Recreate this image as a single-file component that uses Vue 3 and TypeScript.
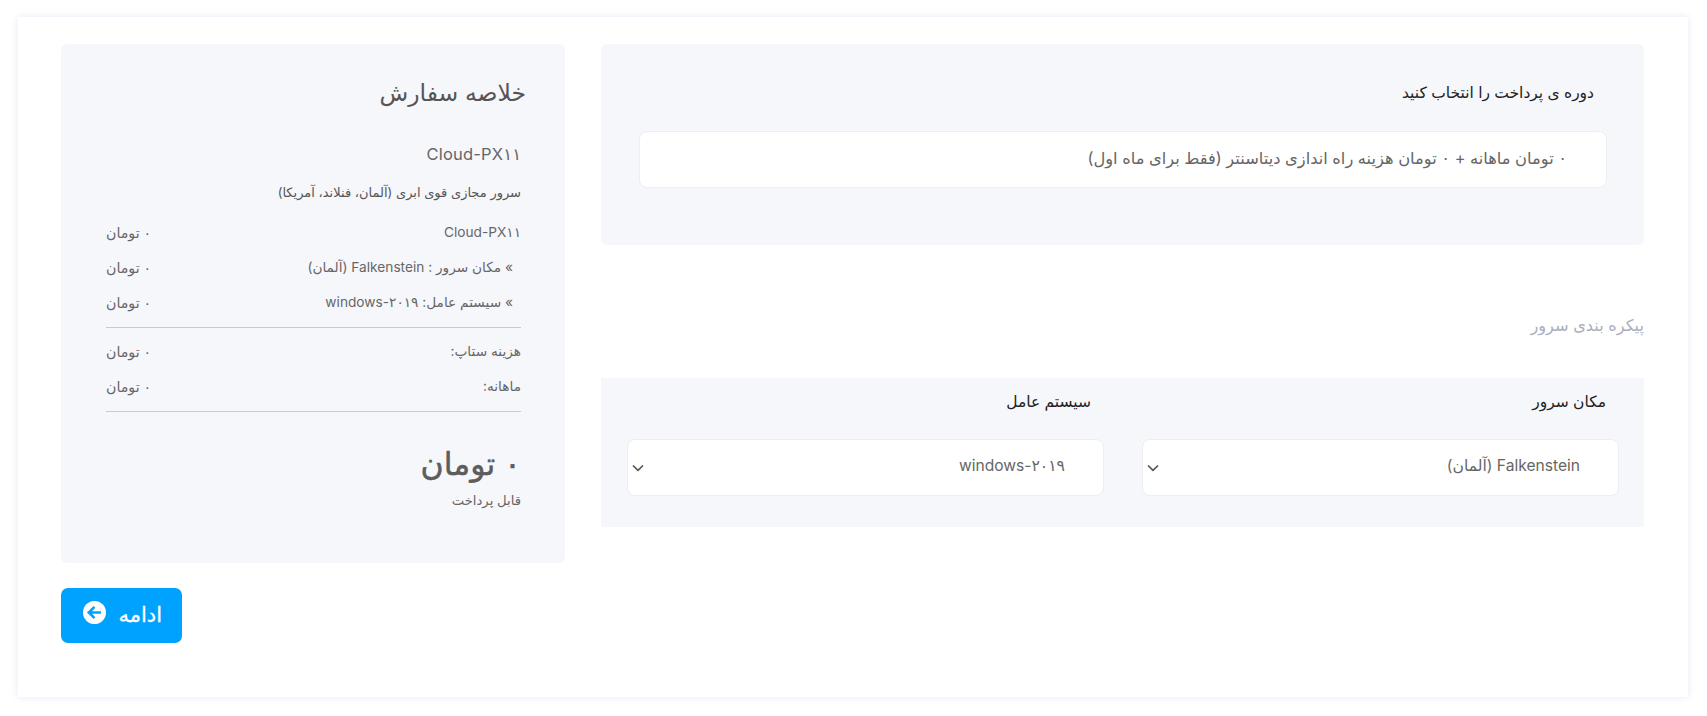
<script setup lang="ts">
interface Row { label: string; price: string; sub?: boolean }
const price = '۰ تومان'
const rowsA: Row[] = [
  { label: 'Cloud-PX۱۱', price },
  { label: '» مکان سرور : Falkenstein (آلمان)', price, sub: true },
  { label: '» سیستم عامل: windows-۲۰۱۹', price, sub: true },
]
const rowsB: Row[] = [
  { label: 'هزینه ستاپ:', price },
  { label: 'ماهانه:', price },
]
const selects = [
  { label: 'مکان سرور', value: 'Falkenstein (آلمان)' },
  { label: 'سیستم عامل', value: 'windows-۲۰۱۹' },
]
</script>

<template>
  <div class="page">
    <div class="card">
      <main class="main">
        <section class="panel period">
          <h3 class="period-title">دوره ی پرداخت را انتخاب کنید</h3>
          <div class="period-box">۰ تومان ماهانه + ۰ تومان هزینه راه اندازی دیتاسنتر (فقط برای ماه اول)</div>
        </section>
        <h4 class="section-title">پیکره بندی سرور</h4>
        <section class="panel config">
          <div v-for="s in selects" :key="s.label" class="field">
            <label class="field-label">{{ s.label }}</label>
            <div class="select">
              <span class="select-value">{{ s.value }}</span>
              <svg class="chevron" width="12" height="8" viewBox="0 0 12 8" fill="none">
                <path d="M1 1.5 6 6.3l5-4.8" stroke="#555" stroke-width="1.7" />
              </svg>
            </div>
          </div>
        </section>
      </main>
      <aside class="side">
        <section class="panel summary">
          <h2 class="summary-title">خلاصه سفارش</h2>
          <div class="product">Cloud-PX۱۱</div>
          <p class="desc">سرور مجازی قوی ابری (آلمان، فنلاند، آمریکا)</p>
          <div class="rows">
            <div v-for="r in rowsA" :key="r.label" class="row">
              <span :class="{ sub: r.sub }">{{ r.label }}</span><span class="price">{{ r.price }}</span>
            </div>
          </div>
          <hr class="rule" />
          <div class="rows">
            <div v-for="r in rowsB" :key="r.label" class="row">
              <span>{{ r.label }}</span><span class="price">{{ r.price }}</span>
            </div>
          </div>
          <hr class="rule" />
          <div class="total">۰ تومان</div>
          <div class="payable">قابل پرداخت</div>
        </section>
        <button class="next" type="button">
          <span>ادامه</span>
          <svg class="next-icon" width="23" height="23" viewBox="0 0 23 23">
            <circle cx="11.5" cy="11.5" r="11.5" fill="#fff" />
            <path d="M18 11.5H6.5M11.5 5.8 5.8 11.5l5.7 5.7" fill="none" stroke="#00a2ff" stroke-width="2.6" />
          </svg>
        </button>
      </aside>
    </div>
  </div>
</template>

<style>
html, body { margin: 0; background: #fff; }
</style>

<style scoped>
.page {
  height: 716px;
  box-sizing: border-box;
  padding: 17px 19px 19px 18px;
  direction: rtl;
  font-family: "Inter", "DejaVu Sans", sans-serif;
  color: #666;
}
.card {
  height: 100%;
  box-sizing: border-box;
  padding: 27px 44px 0 43px;
  background: #fff;
  box-shadow: 0 0 8px #e4e8f8;
  display: flex;
  gap: 36px;
}
.main { width: 1043px; }
.side {
  width: 504px;
  display: flex;
  flex-direction: column;
}
.panel { background: #f6f7fb; }
.period {
  height: 201px;
  box-sizing: border-box;
  border-radius: 6px;
  padding: 38px 37px 0 38px;
}
.period-title {
  margin: 0 13px 27px 0;
  height: 22px;
  line-height: 22px;
  font-size: 15.5px;
  font-weight: 400;
  color: #222;
}
.period-box {
  height: 57px;
  box-sizing: border-box;
  padding: 0 39px 0 38px;
  line-height: 53px;
  font-size: 16.3px;
  background: #fff;
  border: 1px solid #eceef3;
  border-radius: 8px;
}
.section-title {
  margin: 69px 0 42px;
  height: 22px;
  line-height: 22px;
  font-size: 16.2px;
  font-weight: 400;
  color: #a9afbd;
}
.config {
  height: 149px;
  box-sizing: border-box;
  padding: 13px 25px 0 26px;
  display: flex;
  gap: 38px;
}
.field { width: 477px; }
.field-label {
  display: block;
  margin: 0 13px 26px 0;
  height: 22px;
  line-height: 22px;
  font-size: 15.5px;
  color: #222;
}
.select {
  height: 57px;
  box-sizing: border-box;
  padding: 0 38px 4px 4px;
  display: flex;
  align-items: center;
  justify-content: space-between;
  background: #fff;
  border: 1px solid #eceef3;
  border-radius: 8px;
  font-size: 15.6px;
}
.chevron { margin-top: 4px; }
.summary {
  height: 519px;
  flex: none;
  box-sizing: border-box;
  border-radius: 6px;
  padding: 36px 44px 0 45px;
}
.summary-title {
  margin: 0 -5px 0 0;
  height: 26px;
  line-height: 26px;
  font-size: 23.5px;
  font-weight: 400;
  color: #555;
}
.product {
  margin-top: 36px;
  height: 24px;
  line-height: 24px;
  font-size: 16.5px;
  font-weight: 400;
  letter-spacing: 0.2px;
  color: #666;
}
.desc {
  margin: 14px 0 0;
  height: 24px;
  line-height: 24px;
  font-size: 13px;
  color: #555;
}
.rows { margin-top: 11px; }
.row {
  height: 35px;
  line-height: 35px;
  font-size: 13.7px;
  display: flex;
  justify-content: space-between;
}
.price { font-size: 14.2px; }
.sub { margin-right: 8px; }
.rule {
  margin: 7px 0 0;
  border: 0;
  border-top: 1px solid #c7cad3;
}
.rule + .rows { margin-top: 6px; }
.total {
  margin-top: 29px;
  height: 46px;
  line-height: 46px;
  font-size: 31.5px;
  font-weight: 400;
  -webkit-text-stroke: 0.5px #5c5c5c;
  color: #5c5c5c;
}
.payable {
  margin-top: 2px;
  height: 22px;
  line-height: 22px;
  font-size: 13.2px;
}
.next {
  margin-top: 25px;
  align-self: flex-end;
  width: 121px;
  height: 55px;
  display: flex;
  align-items: center;
  justify-content: flex-start;
  gap: 12px;
  padding: 0 20px 3px 0;
  border: 0;
  border-radius: 7px;
  background: #00a2ff;
  color: #fff;
  font-family: inherit;
  font-size: 21px;
  font-weight: 400;
  -webkit-text-stroke: 0.3px #fff;
}
.next-icon { margin-top: -3px; }
</style>
